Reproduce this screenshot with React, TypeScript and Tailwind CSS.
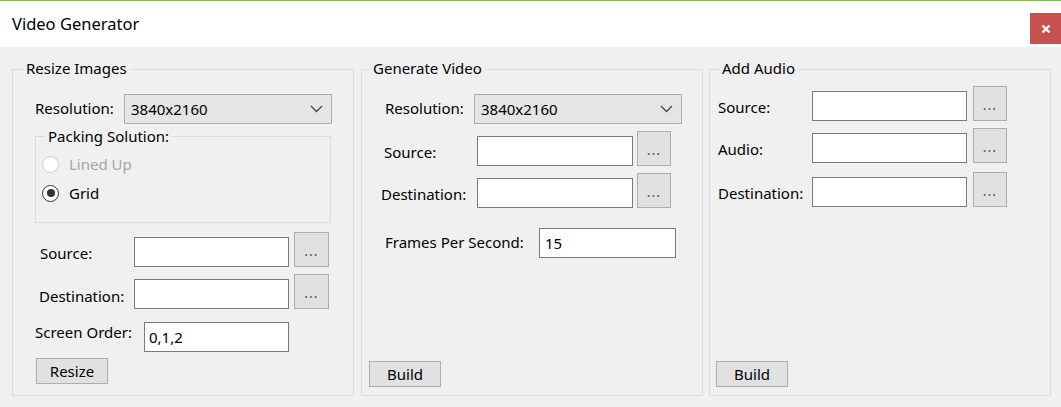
import React from "react";

function TextBox({ className, value }: { className: string; value?: string }) {
  return (
    <div className={"h-[30px] bg-white border border-[#7a7a7a] flex items-center pl-[4px] text-black " + className}>
      {value}
    </div>
  );
}

function Dots({ className }: { className: string }) {
  return (
    <div className={"h-[35px] bg-[#e1e1e1] border border-[#adadad] flex items-center justify-center pt-[3px] text-[14px] tracking-[1px] leading-none text-[#555] " + className}>
      ...
    </div>
  );
}

function Combo() {
  return (
    <div className="w-[208px] h-[30px] bg-[#e5e5e5] border border-[#adadad] flex items-center justify-between pl-[6px] pr-[8px]">
      <span>3840x2160</span>
      <svg width="13" height="8" viewBox="0 0 13 8">
        <polyline points="1,1 6.5,6.5 12,1" fill="none" stroke="#444" strokeWidth="1.3" />
      </svg>
    </div>
  );
}

function PushButton({ className, label }: { className: string; label: string }) {
  return (
    <div className={"w-[72px] h-[26px] bg-[#e1e1e1] border border-[#adadad] flex items-center justify-center leading-none " + className}>
      {label}
    </div>
  );
}

export default function App() {
  return (
    <div className="w-[1061px] h-[407px] bg-[#f0f0f0] font-['Noto_Sans',sans-serif] text-[15px] text-black leading-[20px] overflow-hidden">
      {/* Title bar */}
      <div className="h-[47px] bg-white border-t border-[#86b75c] flex justify-between items-start">
        <div className="ml-[12px] mt-[12px] text-[16.5px] leading-[22px]">Video Generator</div>
        <div className="mt-[12px] w-[31px] h-[31px] bg-[#c75050] flex items-center justify-center">
          <svg width="10" height="10" viewBox="0 0 10 10">
            <path d="M1.5 1.5 L8.5 8.5 M8.5 1.5 L1.5 8.5" stroke="white" strokeWidth="2.4" />
          </svg>
        </div>
      </div>

      {/* Body */}
      <div className="flex pt-[22px] pl-[12px]">
        {/* Group 1 */}
        <div className="relative w-[342px] h-[327px] border border-[#dcdcdc] flex flex-col">
          <span className="absolute left-[10px] -top-[12px] px-[3px] bg-[#f0f0f0]">Resize Images</span>

          <div className="flex items-center mt-[24px]">
            <div className="ml-[22px] w-[89px] pb-[3px]">Resolution:</div>
            <Combo />
          </div>

          <div className="relative mt-[12px] ml-[22px] w-[296px] h-[87px] border border-[#dcdcdc] flex flex-col">
            <span className="absolute left-[9px] -top-[11px] px-[3px] bg-[#f0f0f0]">Packing Solution:</span>
            <div className="flex items-center h-[20px] mt-[17px]">
              <div className="ml-[6px] w-[17px] h-[17px] rounded-full border border-[#cccccc] bg-white" />
              <span className="ml-[10px] text-[#a6a6a6]">Lined Up</span>
            </div>
            <div className="flex items-center h-[20px] mt-[9px]">
              <div className="ml-[6px] w-[17px] h-[17px] rounded-full border border-[#333] bg-white flex items-center justify-center">
                <div className="w-[8px] h-[8px] rounded-full bg-[#333]" />
              </div>
              <span className="ml-[10px]">Grid</span>
            </div>
          </div>

          <div className="flex items-end mt-[9px]">
            <div className="ml-[27px] w-[94px] h-[30px] flex items-center pt-[2px]">Source:</div>
            <TextBox className="w-[155px]" />
            <Dots className="ml-[5px] w-[35px]" />
          </div>

          <div className="flex items-end mt-[7px]">
            <div className="ml-[26px] w-[95px] h-[30px] flex items-center pt-[3px]">Destination:</div>
            <TextBox className="w-[155px]" />
            <Dots className="ml-[5px] w-[35px]" />
          </div>

          <div className="flex items-end mt-[13px]">
            <div className="ml-[22px] w-[109px] h-[30px] flex items-center pb-[10px]">Screen Order:</div>
            <TextBox className="w-[145px]" value="0,1,2" />
          </div>

          <PushButton className="mt-[6px] ml-[23px]" label="Resize" />
        </div>

        {/* Group 2 */}
        <div className="relative ml-[7px] w-[342px] h-[327px] border border-[#dcdcdc] flex flex-col">
          <span className="absolute left-[8px] -top-[12px] px-[3px] bg-[#f0f0f0]">Generate Video</span>

          <div className="flex items-center mt-[24px]">
            <div className="ml-[23px] w-[89px] pb-[3px]">Resolution:</div>
            <Combo />
          </div>

          <div className="flex items-end mt-[7px]">
            <div className="ml-[22px] w-[93px] h-[30px] flex items-center pt-[2px]">Source:</div>
            <TextBox className="w-[156px]" />
            <Dots className="ml-[4px] w-[34px]" />
          </div>

          <div className="flex items-end mt-[7px]">
            <div className="ml-[19px] w-[96px] h-[30px] flex items-center pt-[2px]">Destination:</div>
            <TextBox className="w-[156px]" />
            <Dots className="ml-[4px] w-[34px]" />
          </div>

          <div className="flex items-end mt-[20px]">
            <div className="ml-[23px] w-[154px] h-[30px] flex items-center pb-[3px]">Frames Per Second:</div>
            <TextBox className="w-[137px] pl-[5px]" value="15" />
          </div>

          <PushButton className="mt-auto mb-[8px] ml-[7px]" label="Build" />
        </div>

        {/* Group 3 */}
        <div className="relative ml-[6px] w-[342px] h-[327px] border border-[#dcdcdc] flex flex-col">
          <span className="absolute left-[9px] -top-[12px] px-[3px] bg-[#f0f0f0]">Add Audio</span>

          <div className="flex items-end mt-[16px]">
            <div className="ml-[8px] w-[94px] h-[30px] flex items-center pt-[2px]">Source:</div>
            <TextBox className="w-[155px]" />
            <Dots className="ml-[6px] w-[34px]" />
          </div>

          <div className="flex items-end mt-[7px]">
            <div className="ml-[8px] w-[94px] h-[30px] flex items-center pt-[2px]">Audio:</div>
            <TextBox className="w-[155px]" />
            <Dots className="ml-[6px] w-[34px]" />
          </div>

          <div className="flex items-end mt-[9px]">
            <div className="ml-[8px] w-[94px] h-[30px] flex items-center pt-[1px]">Destination:</div>
            <TextBox className="w-[155px]" />
            <Dots className="ml-[6px] w-[34px]" />
          </div>

          <PushButton className="mt-auto mb-[8px] ml-[6px]" label="Build" />
        </div>
      </div>
    </div>
  );
}
